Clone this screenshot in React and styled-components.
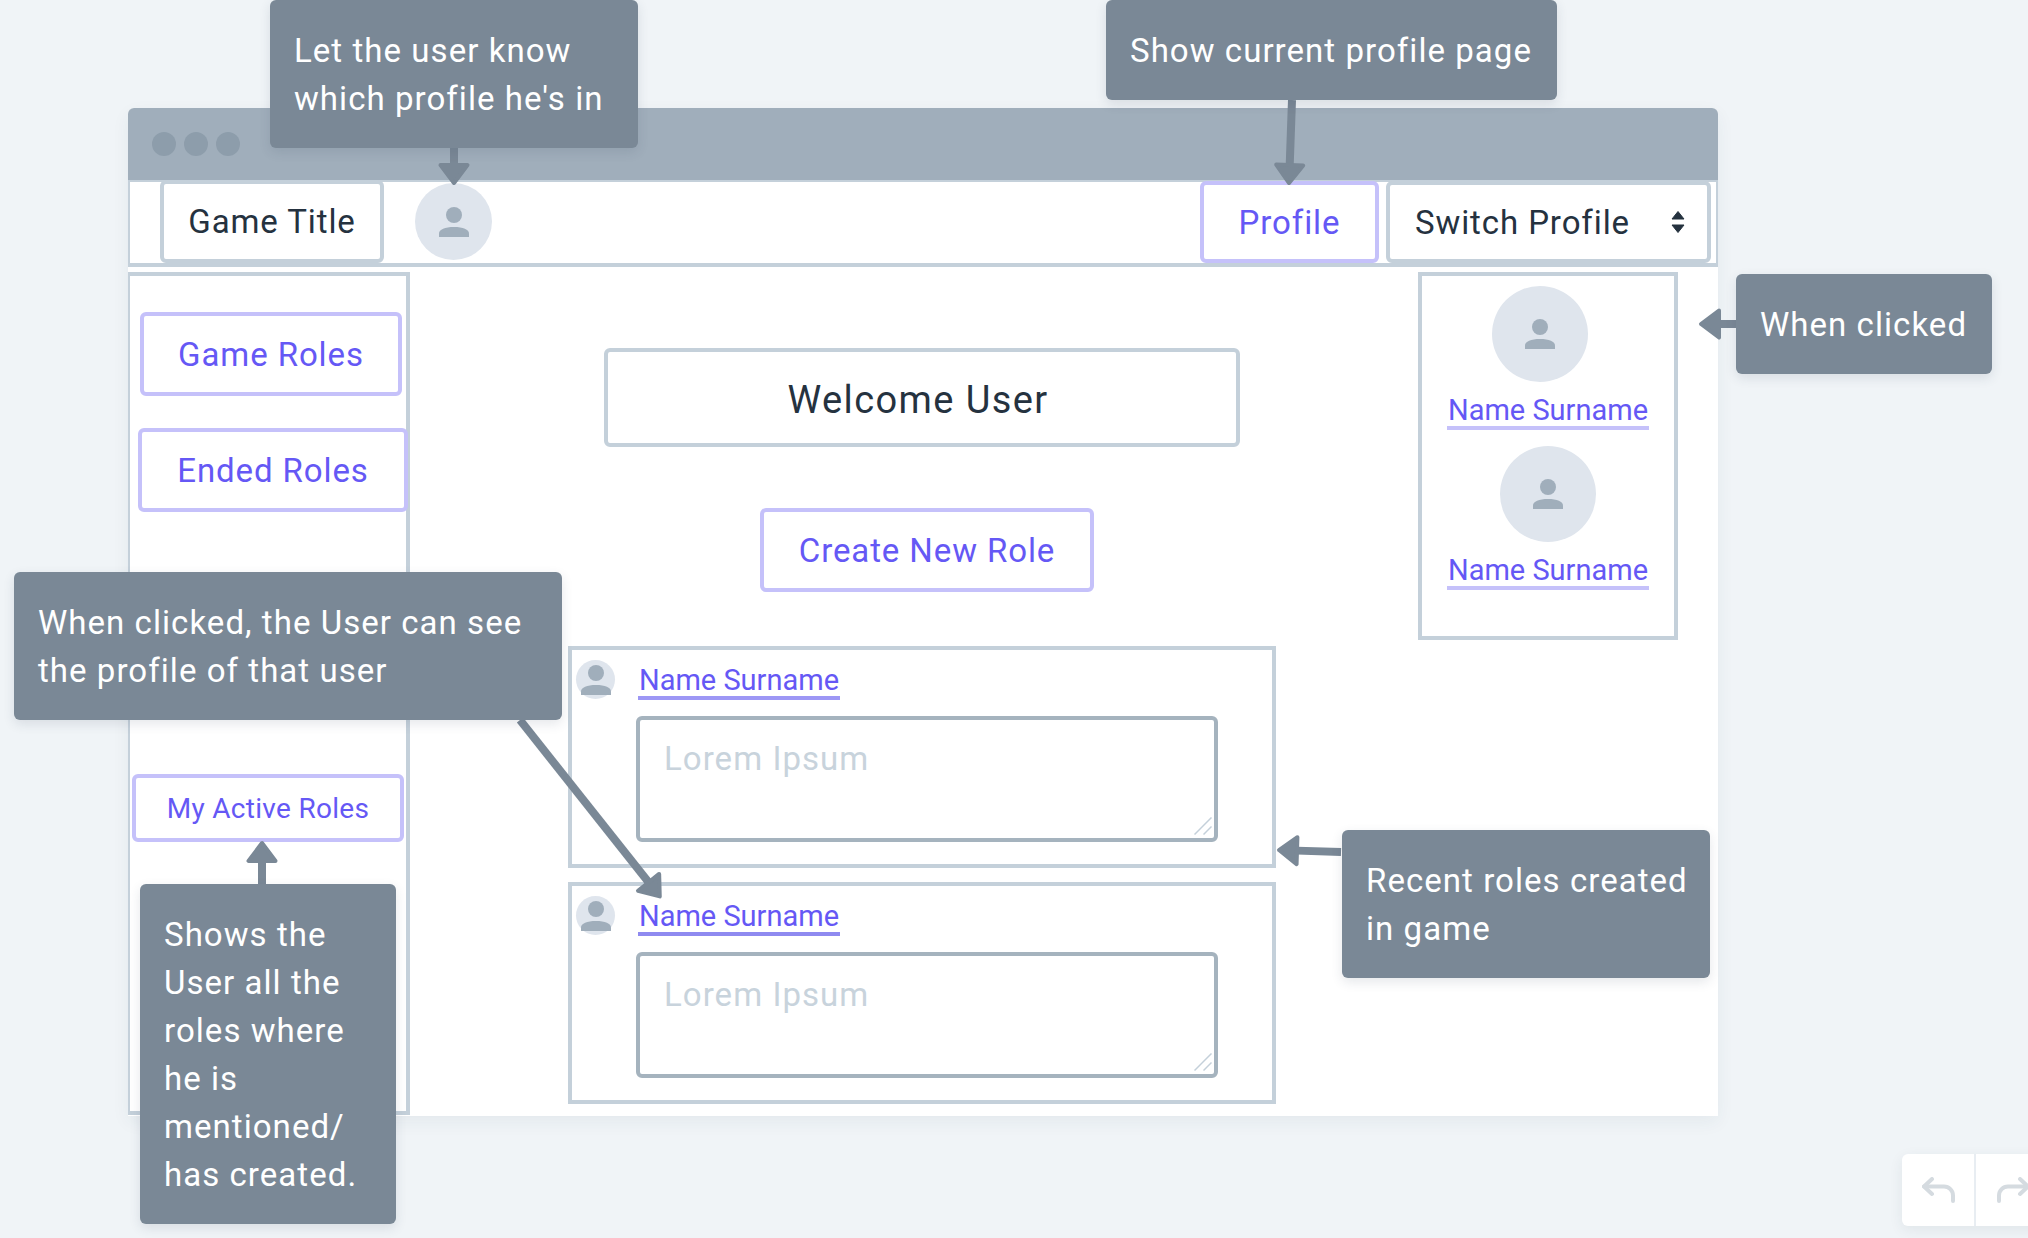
import React from 'react';
import styled, { createGlobalStyle } from 'styled-components';

const GlobalStyle = createGlobalStyle`
  html, body {
    margin: 0;
    padding: 0;
    background: #f0f4f7;
    font-family: Roboto, "Liberation Sans", sans-serif;
  }
`;

const Page = styled.div`
  position: relative;
  width: 2028px;
  height: 1238px;
  overflow: hidden;
  box-sizing: border-box;
  padding: 108px 0 0 128px;
  background: #f0f4f7;
`;

const Browser = styled.div`
  width: 1590px;
  height: 1008px;
  border-radius: 6px 6px 0 0;
  overflow: hidden;
  background: #fff;
  box-shadow: 0 6px 18px rgba(40, 60, 80, 0.06);
  display: flex;
  flex-direction: column;
`;

const TitleBar = styled.div`
  height: 72px;
  flex: none;
  background: #a0aebb;
  display: flex;
  align-items: center;
  gap: 8px;
  padding-left: 24px;
`;

const Dot = styled.span`
  width: 24px;
  height: 24px;
  border-radius: 50%;
  background: #8d9dab;
`;

const NavBar = styled.div`
  height: 87px;
  flex: none;
  box-sizing: border-box;
  border: solid #c4d0da;
  border-width: 0 2px 4px;
  box-shadow: inset 0 2px 0 #c4d0da;
  display: flex;
  padding: 0 5px 0 30px;
`;

const OutlineBox = styled.div`
  box-sizing: border-box;
  border: 4px solid ${p => (p.$accent ? '#c5c1fa' : '#c4d0da')};
  border-radius: 6px;
  background: #fff;
  color: ${p => (p.$accent ? '#6558f5' : '#25323f')};
  font-size: ${p => p.$size || 33}px;
  letter-spacing: ${p => p.$track || 0.9}px;
  display: flex;
  align-items: center;
  justify-content: center;
  flex: none;
  width: ${p => p.$w}px;
  height: ${p => p.$h}px;
  margin-left: ${p => p.$ml || 0}px;
  margin-top: ${p => p.$mt || 0}px;
`;

const ProfileButton = styled(OutlineBox)`
  margin-left: auto;
  align-self: flex-end;
`;

const SelectBox = styled(OutlineBox)`
  justify-content: space-between;
  align-self: flex-end;
  padding: 0 22px 0 25px;
`;

const Circle = styled.div`
  width: ${p => p.$size}px;
  height: ${p => p.$size}px;
  border-radius: 50%;
  background: #dfe5ed;
  display: flex;
  align-items: center;
  justify-content: center;
  flex: none;
`;

const NavAvatar = styled(Circle)`
  margin-left: 31px;
  align-self: center;
`;

const Body = styled.div`
  flex: 1;
  display: flex;
  min-height: 0;
  padding-top: 5px;
`;

const Sidebar = styled.div`
  width: 284px;
  flex: none;
  box-sizing: border-box;
  margin-left: -2px;
  margin-bottom: 1px;
  border: 4px solid #c4d0da;
  display: flex;
  flex-direction: column;
`;

const Center = styled.div`
  width: 708px;
  flex: none;
  margin-left: 158px;
  margin-top: -5px;
  padding-top: 81px;
  display: flex;
  flex-direction: column;
  align-items: flex-start;
`;

const WelcomeBox = styled(OutlineBox)`
  padding: 5px 8px 0 0;
`;

const RoleCard = styled.div`
  box-sizing: border-box;
  width: 708px;
  height: 222px;
  margin-top: ${p => p.$mt}px;
  border: 4px solid #c4d0da;
  padding: 10px 0 0 4px;
  display: flex;
  gap: 21px;
`;

const RoleBody = styled.div`
  display: flex;
  flex-direction: column;
  align-items: flex-start;
`;

const NameLink = styled.a`
  box-sizing: border-box;
  display: block;
  width: ${p => p.$w || 202}px;
  height: 40px;
  line-height: 40px;
  margin-left: ${p => p.$ml || 0}px;
  border-bottom: 4px solid ${p => p.$line || '#c5c1fa'};
  color: #6558f5;
  font-size: 29px;
  text-align: center;
  white-space: nowrap;
`;

const RoleField = styled.div`
  position: relative;
  margin-top: 16px;
`;

const RoleText = styled.textarea`
  box-sizing: border-box;
  display: block;
  width: 582px;
  height: 126px;
  margin: 0;
  padding: 19px 24px;
  border: 4px solid #a5b3be;
  border-radius: 6px;
  outline: none;
  resize: none;
  background: #fff;
  color: #25323f;
  font-family: inherit;
  font-size: 33px;
  letter-spacing: 1.05px;
  line-height: 40px;

  &::placeholder {
    color: #c8d3dc;
    opacity: 1;
  }
`;

const Grip = styled.svg`
  position: absolute;
  right: 6px;
  bottom: 7px;
`;

const SwitchPanel = styled.div`
  width: 260px;
  height: 368px;
  flex: none;
  box-sizing: border-box;
  margin-left: 142px;
  border: 4px solid #c4d0da;
  padding-top: 10px;
  display: flex;
  flex-direction: column;
  align-items: center;
`;

const PanelEntry = styled.div`
  display: flex;
  flex-direction: column;
  align-items: center;
  margin-bottom: 16px;
`;

const PanelAvatar = styled(Circle)`
  margin-right: ${p => p.$shift || 0}px;
  margin-bottom: 8px;
`;

const Note = styled.div`
  position: absolute;
  left: ${p => p.$x}px;
  top: ${p => p.$y}px;
  width: ${p => p.$w}px;
  box-sizing: border-box;
  padding: 27px 0 25px 24px;
  background: #7a8896;
  border-radius: 6px;
  box-shadow: 0 4px 12px rgba(40, 60, 80, 0.12);
  color: #fff;
  font-size: 33px;
  line-height: 48px;
  letter-spacing: 1.05px;
  white-space: pre-line;
`;

const ArrowLayer = styled.svg`
  position: absolute;
  left: 0;
  top: 0;
  pointer-events: none;
`;

const HistoryBar = styled.div`
  position: absolute;
  left: 1902px;
  top: 1154px;
  width: 180px;
  height: 72px;
  border-radius: 6px;
  background: #fff;
  box-shadow: 0 4px 14px rgba(40, 60, 80, 0.08);
  display: flex;
`;

const HistoryButton = styled.div`
  width: 72px;
  flex: none;
  display: flex;
  align-items: center;
  padding-left: ${p => p.$pl}px;
  box-sizing: border-box;
  & + & {
    border-left: 2px solid #e8edf2;
  }
`;

const PersonIcon = () => (
  <svg width="30" height="30" viewBox="0 0 30 30" fill="#a0aebb">
    <ellipse cx="15" cy="8" rx="8" ry="8" />
    <path d="M0 30V26.5C0 22.5 6 20 15 20S30 22.5 30 26.5V30Z" />
  </svg>
);

const SortIcon = () => (
  <svg width="14" height="22" viewBox="0 0 14 22" fill="#25323f">
    <path d="M7 0.5L13 8H1Z" stroke="#25323f" strokeLinejoin="round" />
    <path d="M7 21.5L13 14H1Z" stroke="#25323f" strokeLinejoin="round" />
  </svg>
);

const GripIcon = () => (
  <Grip width="18" height="18" viewBox="0 0 18 18" stroke="#c4d0da" strokeWidth="1.5">
    <line x1="0.5" y1="17.5" x2="17.5" y2="0.5" />
    <line x1="9.5" y1="17.5" x2="17.5" y2="9.5" />
  </Grip>
);

const BackIcon = ({ flip }) => (
  <svg
    width="34"
    height="26"
    viewBox="0 0 34 26"
    fill="none"
    stroke="#d5dbe0"
    strokeWidth="4"
    strokeLinecap="round"
    strokeLinejoin="round"
    style={flip ? { transform: 'scaleX(-1)' } : undefined}
  >
    <path d="M10 2L2 9.5L10 17" />
    <path d="M2 9.5H22A9 9 0 0 1 31 18.5V24" />
  </svg>
);

// arrow from a note to what it points at; the head is computed from the line direction
const Arrow = ({ from, to }) => {
  const dx = to[0] - from[0];
  const dy = to[1] - from[1];
  const len = Math.hypot(dx, dy);
  const ux = dx / len;
  const uy = dy / len;
  const bx = to[0] - ux * 20;
  const by = to[1] - uy * 20;
  const wing = 13.5;
  const points = [
    `${to[0] - ux * 2},${to[1] - uy * 2}`,
    `${bx + uy * wing},${by - ux * wing}`,
    `${bx - uy * wing},${by + ux * wing}`,
  ].join(' ');
  return (
    <g stroke="#7a8896">
      <line x1={from[0]} y1={from[1]} x2={bx} y2={by} strokeWidth="8" />
      <polygon points={points} fill="#7a8896" strokeWidth="4" strokeLinejoin="round" />
    </g>
  );
};

const roles = [
  { mt: 54, line: '#9d97f5' },
  { mt: 14, line: '#8f8af0' },
];

const App = () => (
  <Page>
    <GlobalStyle />
    <Browser>
      <TitleBar>
        <Dot />
        <Dot />
        <Dot />
      </TitleBar>
      <NavBar>
        <OutlineBox $w={224} $h={83}>Game Title</OutlineBox>
        <NavAvatar $size={77}>
          <PersonIcon />
        </NavAvatar>
        <ProfileButton $accent $w={179} $h={82}>Profile</ProfileButton>
        <SelectBox $w={325} $h={82} $ml={7}>
          Switch Profile
          <SortIcon />
        </SelectBox>
      </NavBar>
      <Body>
        <Sidebar>
          <OutlineBox $accent $w={262} $h={84} $ml={10} $mt={36}>Game Roles</OutlineBox>
          <OutlineBox $accent $w={270} $h={84} $ml={8} $mt={32}>Ended Roles</OutlineBox>
          <OutlineBox $accent $w={272} $h={68} $ml={2} $mt={262} $size={28} $track={0.3}>My Active Roles</OutlineBox>
        </Sidebar>
        <Center>
          <WelcomeBox $w={636} $h={99} $ml={36} $size={38} $track={1.4}>Welcome User</WelcomeBox>
          <OutlineBox $accent $w={334} $h={84} $ml={192} $mt={61}>Create New Role</OutlineBox>
          {roles.map((role, i) => (
            <RoleCard key={i} $mt={role.mt}>
              <Circle $size={39}>
                <PersonIcon />
              </Circle>
              <RoleBody>
                <NameLink $ml={2} $line={role.line}>Name Surname</NameLink>
                <RoleField>
                  <RoleText placeholder="Lorem Ipsum" />
                  <GripIcon />
                </RoleField>
              </RoleBody>
            </RoleCard>
          ))}
        </Center>
        <SwitchPanel>
          <PanelEntry>
            <PanelAvatar $size={96} $shift={16}>
              <PersonIcon />
            </PanelAvatar>
            <NameLink>Name Surname</NameLink>
          </PanelEntry>
          <PanelEntry>
            <PanelAvatar $size={96}>
              <PersonIcon />
            </PanelAvatar>
            <NameLink>Name Surname</NameLink>
          </PanelEntry>
        </SwitchPanel>
      </Body>
    </Browser>

    <ArrowLayer width="2028" height="1238">
      <Arrow from={[454, 148]} to={[454, 185]} />
      <Arrow from={[1292, 100]} to={[1289, 185]} />
      <Arrow from={[1736, 324]} to={[1699, 324]} />
      <Arrow from={[520, 720]} to={[661, 898]} />
      <Arrow from={[1341, 852]} to={[1277, 850]} />
      <Arrow from={[262, 884]} to={[262, 841]} />
    </ArrowLayer>

    <Note $x={270} $y={0} $w={368}>{"Let the user know\nwhich profile he's in"}</Note>
    <Note $x={1106} $y={0} $w={451}>Show current profile page</Note>
    <Note $x={1736} $y={274} $w={256}>When clicked</Note>
    <Note $x={14} $y={572} $w={548}>{'When clicked, the User can see\nthe profile of that user'}</Note>
    <Note $x={1342} $y={830} $w={368}>{'Recent roles created\nin game'}</Note>
    <Note $x={140} $y={884} $w={256}>{'Shows the\nUser all the\nroles where\nhe is\nmentioned/\nhas created.'}</Note>

    <HistoryBar>
      <HistoryButton $pl={20}>
        <BackIcon />
      </HistoryButton>
      <HistoryButton $pl={20}>
        <BackIcon flip />
      </HistoryButton>
    </HistoryBar>
  </Page>
);

export default App;
